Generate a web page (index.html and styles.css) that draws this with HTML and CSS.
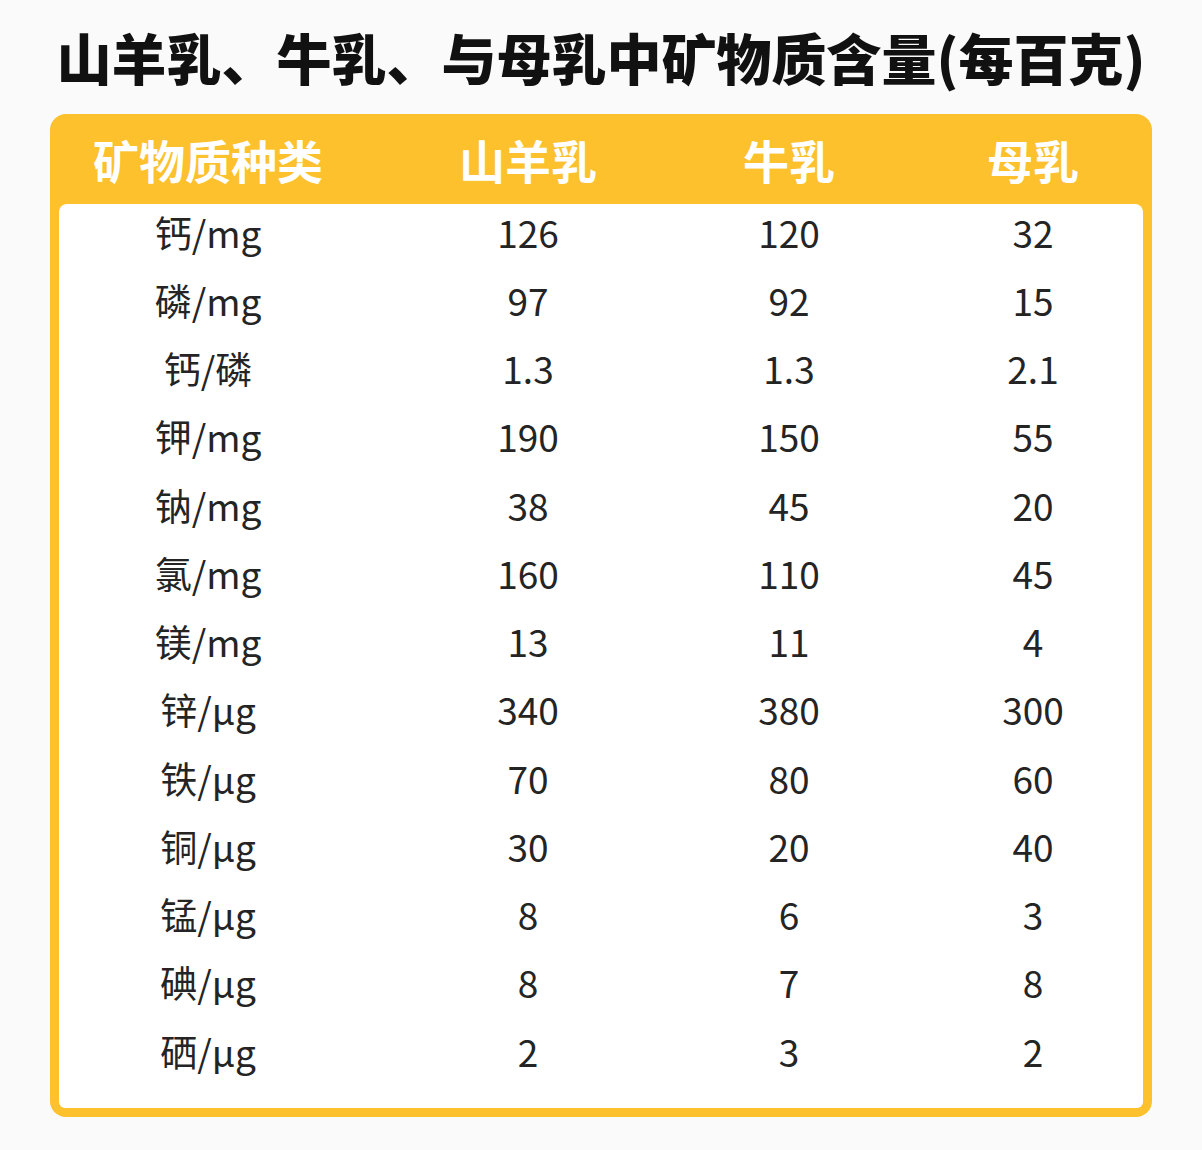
FILE: index.html
```html
<!DOCTYPE html>
<html lang="zh">
<head>
<meta charset="utf-8">
<link rel="stylesheet" href="styles.css">
</head>
<body>
<h1 class="title">山羊乳、牛乳、与母乳中矿物质含量(每百克)</h1>
<div class="card">
  <div class="row head">
    <div>矿物质种类</div><div>山羊乳</div><div>牛乳</div><div class="c4">母乳</div>
  </div>
  <div class="body">
    <div class="row"><div>钙/mg</div><div>126</div><div>120</div><div class="c4">32</div></div>
    <div class="row"><div>磷/mg</div><div>97</div><div>92</div><div class="c4">15</div></div>
    <div class="row"><div>钙/磷</div><div>1.3</div><div>1.3</div><div class="c4">2.1</div></div>
    <div class="row"><div>钾/mg</div><div>190</div><div>150</div><div class="c4">55</div></div>
    <div class="row"><div>钠/mg</div><div>38</div><div>45</div><div class="c4">20</div></div>
    <div class="row"><div>氯/mg</div><div>160</div><div>110</div><div class="c4">45</div></div>
    <div class="row"><div>镁/mg</div><div>13</div><div>11</div><div class="c4">4</div></div>
    <div class="row"><div>锌/μg</div><div>340</div><div>380</div><div class="c4">300</div></div>
    <div class="row"><div>铁/μg</div><div>70</div><div>80</div><div class="c4">60</div></div>
    <div class="row"><div>铜/μg</div><div>30</div><div>20</div><div class="c4">40</div></div>
    <div class="row"><div>锰/μg</div><div>8</div><div>6</div><div class="c4">3</div></div>
    <div class="row"><div>碘/μg</div><div>8</div><div>7</div><div class="c4">8</div></div>
    <div class="row"><div>硒/μg</div><div>2</div><div>3</div><div class="c4">2</div></div>
  </div>
</div>
</body>
</html>
```
FILE: styles.css
```css
html, body {
  margin: 0;
  padding: 0;
  background: #fafafb;
}
body {
  width: 1202px;
  height: 1150px;
  font-family: "Noto Sans CJK SC", "Noto Sans", sans-serif;
  color: #242424;
}
.title {
  margin: 0;
  padding-top: 29px;
  height: 114px;
  box-sizing: border-box;
  text-align: center;
  font-size: 55px;
  line-height: 55px;
  font-weight: 900;
  color: #111;
  white-space: nowrap;
}
.card {
  margin: 0 50px;
  background: #fcc12c;
  border-radius: 16px;
  padding: 0 9px 9px;
}
.row {
  display: grid;
  grid-template-columns: 298px 342px 180px 1fr;
  text-align: center;
}
.row .c4 {
  padding-left: 44px;
}
.head {
  height: 90px;
  align-items: center;
  color: #fff;
  font-size: 46px;
  font-weight: 700;
  line-height: 1;
}
.body {
  background: #fff;
  border-radius: 8px 8px 6px 6px;
  padding: 0 0 17px;
}
.body .row {
  height: 68.25px;
  align-items: center;
  font-size: 37px;
  line-height: 1;
  position: relative;
  top: -6px;
}
```
